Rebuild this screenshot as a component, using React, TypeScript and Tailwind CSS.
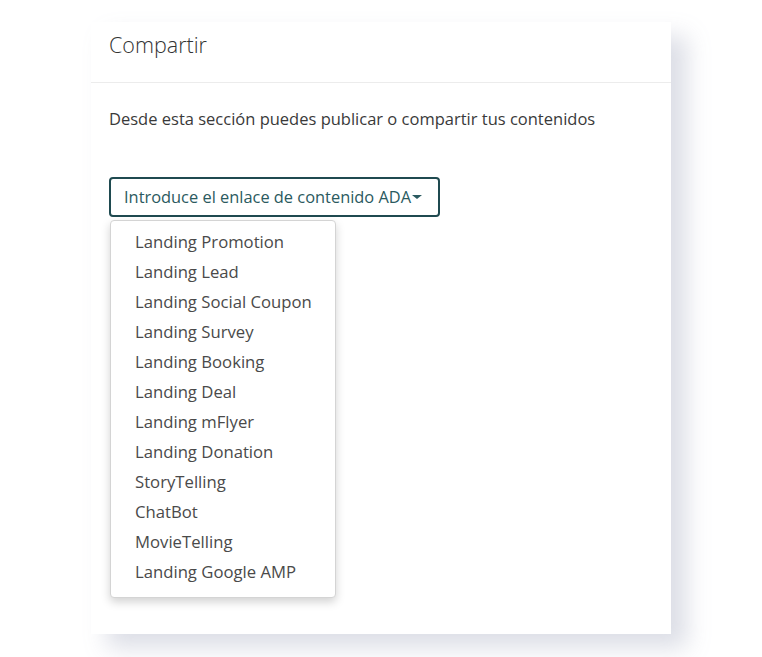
const items = [
  "Landing Promotion",
  "Landing Lead",
  "Landing Social Coupon",
  "Landing Survey",
  "Landing Booking",
  "Landing Deal",
  "Landing mFlyer",
  "Landing Donation",
  "StoryTelling",
  "ChatBot",
  "MovieTelling",
  "Landing Google AMP",
];

export default function App() {
  return (
    <div className="min-h-[657px] w-full bg-white pl-[91px] pt-[22px] font-['Open_Sans',sans-serif]">
      <div className="h-[612px] w-[580px] bg-white shadow-[16px_14px_22px_rgba(214,216,226,0.85)]">
        <header className="h-[61px] border-b border-[#ececec] pl-[18px] pt-[9px]">
          <h1 className="text-[21.5px] leading-[28px] font-light text-[#333]">Compartir</h1>
        </header>
        <div className="pl-[18px] pt-[24px]">
          <p className="text-[16.5px] leading-[24px] text-[#3a3a3a]">
            Desde esta sección puedes publicar o compartir tus contenidos
          </p>
          <button
            className="mt-[46px] flex h-[40px] w-[331px] items-center whitespace-nowrap rounded-[4px] border-2 border-[#1f4a50] pl-[13px] text-[16.4px] text-[#2b5a60]"
            type="button"
          >
            Introduce el enlace de contenido ADA
            <span className="ml-[1px] inline-block h-0 w-0 border-x-[5px] border-t-[4px] border-x-transparent border-t-[#2b5a60]" />
          </button>
          <ul className="mt-[3px] ml-[1px] w-[226px] rounded-[4px] border border-[#d4d4d4] bg-white pt-[6px] pb-[10px] shadow-[0_4px_10px_rgba(0,0,0,0.18)]">
            {items.map((item) => (
              <li className="whitespace-nowrap px-6 text-[16.7px] leading-[30px] text-[#4a4a4a]" key={item}>
                {item}
              </li>
            ))}
          </ul>
        </div>
      </div>
    </div>
  );
}
